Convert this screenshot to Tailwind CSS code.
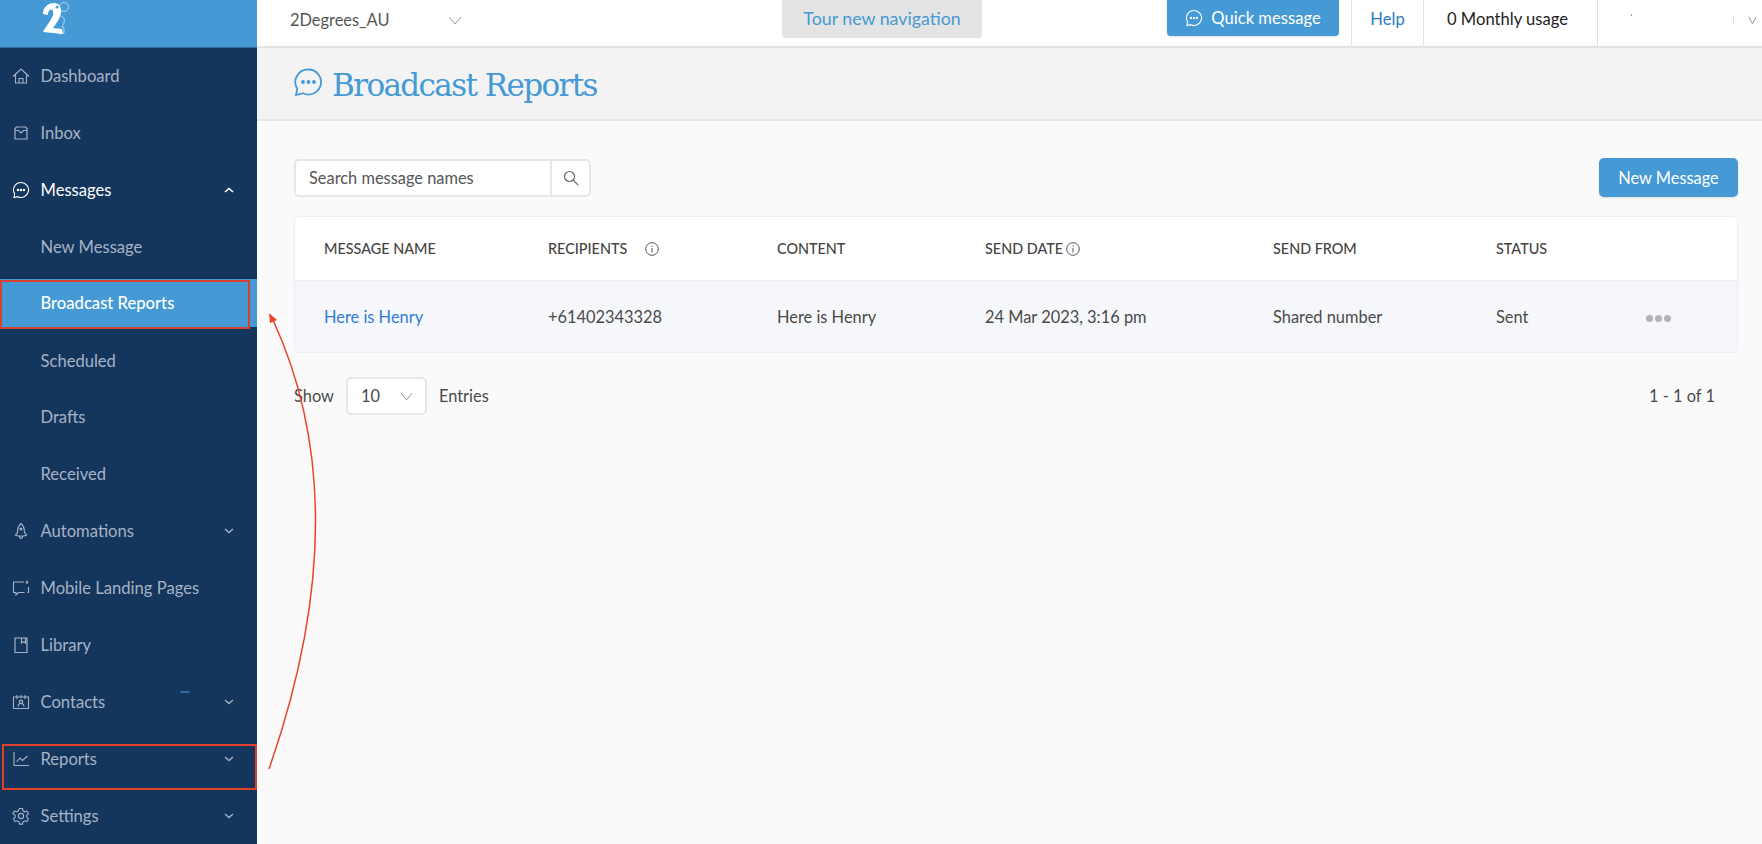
<!DOCTYPE html>
<html lang="en">
<head>
  <meta charset="UTF-8" />
  <title>Broadcast Reports</title>
  <script src="https://cdn.jsdelivr.net/npm/@tailwindcss/browser@4"></script>
</head>
<body class="h-[844px] overflow-hidden bg-[#fafafa] font-['Lato',sans-serif] text-[#4a4a4a] relative">
  <div class="flex h-full">
    <!-- sidebar -->
    <aside class="w-[257px] shrink-0 bg-[#14355c] text-[16.6px] leading-[24px] text-[#a6b3c6]">
      <div class="h-[47px] bg-[#459ad5] relative border-b border-[#2c6a9c] box-content -mb-px">
        <svg class="absolute left-0 top-0" width="80" height="47" viewBox="0 0 80 47">
          <path d="M61 16c3 1 4 4 3 7l-2 4 2 1v5l-5 1" fill="none" stroke="#cfe5f5" stroke-width="0.8"/>
          <circle cx="64" cy="7" r="4.500" fill="none" stroke="#cfe5f5" stroke-width="0.8"/>
          <path d="M43 14C43 7 48 3 54 3c5 0 8 4 7 10-1 6-5 11-8 15l9 1 1 5-20-2c3-6 8-11 10-17 1-4-1-6-3-5-2 1-2 3-2 5z" fill="#fff"/>
          <circle cx="57" cy="7" r="1.500" fill="#459ad5"/>
        </svg>
      </div>
      <nav>
        <a class="flex items-center h-[57px] pl-3 pr-[22px]">
          <svg class="w-[18px] h-[18px] mr-[10.500px]" viewBox="0 0 18 18" fill="none" stroke="currentColor" stroke-width="1.1"><path d="M1 9.500 9 2l8 7.500M3.500 8v8h11V8M7 16v-4.500h4V16"/></svg>
          <span>Dashboard</span>
        </a>
        <a class="flex items-center h-[57px] pl-3 pr-[22px]">
          <svg class="w-[18px] h-[18px] mr-[10.500px]" viewBox="0 0 18 18" fill="none" stroke="currentColor" stroke-width="1.2"><path d="M3 4.500 4.500 3h9L15 4.500V15H3zM3 6.500h3.500L9 9l2.500-2.500H15"/></svg>
          <span>Inbox</span>
        </a>
        <a class="flex items-center h-[57px] pl-3 pr-[22px] text-white">
          <svg class="w-[18px] h-[18px] mr-[10.500px]" viewBox="0 0 18 18" fill="none" stroke="currentColor" stroke-width="1.1"><path d="M9 1.500a7.500 7.500 0 1 1-3.300 14.200L2 16.500l.6-3.600A7.500 7.500 0 0 1 9 1.500z"/><circle cx="6" cy="9" r=".7" fill="currentColor"/><circle cx="9" cy="9" r=".7" fill="currentColor"/><circle cx="12" cy="9" r=".7" fill="currentColor"/></svg>
          <span>Messages</span>
          <svg class="ml-auto" width="12" height="8" viewBox="0 0 12 8" fill="none" stroke="currentColor" stroke-width="1.6"><path d="m2 6 4-3.500L10 6"/></svg>
        </a>
        <a class="flex items-center h-[57px] pl-[40.500px]">New Message</a>
        <a class="flex items-center h-[48px] mt-[4px] mb-[5px] pl-[40.500px] bg-[#459ad5] text-white font-medium">Broadcast Reports</a>
        <a class="flex items-center h-[57px] pl-[40.500px]">Scheduled</a>
        <a class="flex items-center h-[56px] pl-[40.500px]">Drafts</a>
        <a class="flex items-center h-[57px] pl-[40.500px]">Received</a>
        <a class="flex items-center h-[57px] pl-3 pr-[22px]">
          <svg class="w-[18px] h-[18px] mr-[10.500px]" viewBox="0 0 18 18" fill="none" stroke="currentColor" stroke-width="1.2"><path d="M9 1.500c2.500 2 3.500 5 3.500 9l2 2.500-2.500 1H6l-2.500-1 2-2.500c0-4 1-7 3.500-9zM7.500 14.500c.2 1.500.8 2 1.500 2s1.300-.5 1.500-2"/><circle cx="9" cy="7" r="1" fill="currentColor"/></svg>
          <span>Automations</span>
          <svg class="ml-auto" width="12" height="8" viewBox="0 0 12 8" fill="none" stroke="currentColor" stroke-width="1.4"><path d="m2 2 4 3.500L10 2"/></svg>
        </a>
        <a class="flex items-center h-[57px] pl-3 pr-[22px]">
          <svg class="w-[18px] h-[18px] mr-[10.500px]" viewBox="0 0 18 18" fill="none" stroke="currentColor" stroke-width="1.1"><path d="M12 3H1.500v10.500h2.500V16l2.500-2.500h6M16.500 8v5.500h-1M15 1.500V5M13.500 3.200h3"/></svg>
          <span>Mobile Landing Pages</span>
        </a>
        <a class="flex items-center h-[57px] pl-3 pr-[22px]">
          <svg class="w-[18px] h-[18px] mr-[10.500px]" viewBox="0 0 18 18" fill="none" stroke="currentColor" stroke-width="1.2"><path d="M3 2h12v14.500H3zM9.500 2v5l2-1.200 2 1.200V2"/></svg>
          <span>Library</span>
        </a>
        <a class="flex items-center h-[57px] pl-3 pr-[22px] relative">
          <svg class="w-[18px] h-[18px] mr-[10.500px]" viewBox="0 0 18 18" fill="none" stroke="currentColor" stroke-width="1.1"><path d="M1.500 4h15v11.500h-15zM5 2v4M9 2v3M13 2v4M6 13.500c0-2 1.300-3 3-3s3 1 3 3M9 10.500a1.700 1.700 0 1 0 0-3.400 1.700 1.700 0 0 0 0 3.400z"/></svg>
          <span>Contacts</span>
          <span class="absolute left-[180px] top-[18px] w-[10px] h-[2px] rounded-t-full bg-[#2f6c9f]"></span>
          <svg class="ml-auto" width="12" height="8" viewBox="0 0 12 8" fill="none" stroke="currentColor" stroke-width="1.4"><path d="m2 2 4 3.500L10 2"/></svg>
        </a>
        <a class="flex items-center h-[57px] pl-3 pr-[22px]">
          <svg class="w-[18px] h-[18px] mr-[10.500px]" viewBox="0 0 18 18" fill="none" stroke="currentColor" stroke-width="1.1"><path d="M2 2v13.500h15M4.500 12l3.500-4 2.500 2.500L15.500 6"/></svg>
          <span>Reports</span>
          <svg class="ml-auto" width="12" height="8" viewBox="0 0 12 8" fill="none" stroke="currentColor" stroke-width="1.4"><path d="m2 2 4 3.500L10 2"/></svg>
        </a>
        <a class="flex items-center h-[57px] pl-3 pr-[22px]">
          <svg class="w-[18px] h-[18px] mr-[10.500px]" viewBox="0 0 18 18" fill="none" stroke="currentColor" stroke-width="1.1"><path d="M7.500 1.500h3l.5 2.300 1.700 1 2.300-.7 1.500 2.600-1.700 1.600v2l1.700 1.600-1.500 2.600-2.300-.7-1.700 1-.5 2.300h-3l-.5-2.300-1.700-1-2.300.7-1.500-2.600 1.700-1.600v-2L.8 6.700l1.500-2.600 2.300.7 1.700-1z"/><circle cx="9" cy="9" r="2.600"/></svg>
          <span>Settings</span>
          <svg class="ml-auto" width="12" height="8" viewBox="0 0 12 8" fill="none" stroke="currentColor" stroke-width="1.4"><path d="m2 2 4 3.500L10 2"/></svg>
        </a>
      </nav>
    </aside>

    <div class="flex-1 min-w-0">
      <!-- top bar -->
      <header class="h-[48px] bg-white border-b-2 border-[#e3e3e3] flex items-start text-[16.6px]">
        <div class="w-[526px] pl-[33px] h-[41px] flex items-center text-[16.4px]">
          <span class="text-[#555] w-[158px]">2Degrees_AU</span>
          <svg width="14" height="9" viewBox="0 0 14 9" fill="none" stroke="#9b9b9b" stroke-width="1"><path d="m1 1 6 7 6-7"/></svg>
        </div>
        <div class="-ml-[1px] w-[200px] h-[38px] bg-[#e4e4e4] rounded-b-[4px] flex items-center justify-center text-[#4699d3] text-[17.800px] pb-[2px]">Tour new navigation</div>
        <div class="ml-[185px] w-[172px] h-[36px] bg-[#459ad5] rounded-b-[4px] shadow-[0_1px_2px_#0000001f] flex items-center justify-center text-white">
          <svg class="mr-2" width="18" height="18" viewBox="0 0 18 18" fill="none" stroke="currentColor" stroke-width="1.1"><path d="M9 1.500a7.500 7.500 0 1 1-3.300 14.200L2 16.500l.6-3.600A7.500 7.500 0 0 1 9 1.500z"/><circle cx="6" cy="9" r=".6" fill="currentColor"/><circle cx="9" cy="9" r=".6" fill="currentColor"/><circle cx="12" cy="9" r=".6" fill="currentColor"/></svg>
          <span>Quick message</span>
        </div>
        <div class="ml-[12px] w-[72px] h-full border-l border-[#e3e3e3] flex items-center justify-center text-[#2e7cc0] pb-[7px]">Help</div>
        <div class="w-[174px] h-full border-l border-[#e3e3e3] flex items-center pl-[23px] text-[#222] pb-[8px]">0 Monthly usage</div>
        <div class="flex-1 h-full border-l border-[#e3e3e3] relative">
          <span class="absolute left-[33px] top-[14px] w-px h-[2px] bg-[#999]"></span>
          <span class="absolute left-[135px] top-[17px] w-px h-[8px] bg-[#ddd]"></span>
          <svg class="absolute left-[150px] top-[16px]" width="9" height="9" viewBox="0 0 9 9" fill="none" stroke="#9b9b9b" stroke-width="1"><path d="m1 1 3.500 7L8 1"/></svg>
        </div>
      </header>

      <!-- page title -->
      <div class="h-[73px] bg-[#f3f3f3] border-b-2 border-[#e6e6e6] flex items-center pl-[37px]">
        <svg class="mr-[10px] mt-[-3px]" width="28" height="28" viewBox="0 0 28 28" fill="none" stroke="#459ad5" stroke-width="1.800"><path d="M14.500 1.500a12.500 12.500 0 1 1-5.500 23.700L2 27l1.300-6.300A12.500 12.500 0 0 1 14.500 1.500z"/><circle cx="9" cy="14" r="1" fill="#459ad5"/><circle cx="14.500" cy="14" r="1" fill="#459ad5"/><circle cx="20" cy="14" r="1" fill="#459ad5"/></svg>
        <h1 class="font-['DejaVu_Serif',serif] text-[#459ad5] text-[31px] tracking-[-1.600px] pt-[3px]">Broadcast Reports</h1>
      </div>

      <!-- content -->
      <main class="pl-[37px] pr-[24px] pt-[37px] leading-[24px]">
        <div class="flex items-center justify-between">
          <div class="w-[297px] h-[38px] bg-white border-2 border-[#e6e6e6] rounded-[5px] flex items-stretch">
            <span class="flex-1 flex items-center pl-[13px] text-[16.400px] text-[#555]">Search message names</span>
            <span class="w-[39px] border-l-2 border-[#e6e6e6] flex items-center justify-center">
              <svg width="16" height="16" viewBox="0 0 16 16" fill="none" stroke="#666" stroke-width="1.200"><circle cx="6.500" cy="6.500" r="5"/><path d="m10.200 10.200 5 5"/></svg>
            </span>
          </div>
          <button class="w-[139px] h-[39px] bg-[#459ad5] rounded-[5px] text-white text-[16.400px] shadow-[0_1px_2px_#0000001f]">New Message</button>
        </div>

        <div class="mt-[19px] border border-[#eceef2] rounded-[5px] overflow-hidden">
          <div class="h-[64px] bg-white border-b border-[#eceef2] grid grid-cols-[224px_229px_208px_288px_223px_150px_1fr] pl-[29px] items-center text-[14.400px] font-medium text-[#444] uppercase">
            <span>Message name</span>
            <span class="flex items-center">Recipients<svg class="ml-[18px]" width="14" height="14" viewBox="0 0 14 14" fill="none" stroke="#555" stroke-width="1"><circle cx="7" cy="7" r="6.300"/><path d="M7 6v4.500M7 3.500v1.300"/></svg></span>
            <span>Content</span>
            <span class="flex items-center">Send date<svg class="ml-[3px]" width="14" height="14" viewBox="0 0 14 14" fill="none" stroke="#555" stroke-width="1"><circle cx="7" cy="7" r="6.300"/><path d="M7 6v4.500M7 3.500v1.300"/></svg></span>
            <span>Send from</span>
            <span>Status</span>
            <span></span>
          </div>
          <div class="h-[71px] bg-[#f6f7fa] grid grid-cols-[224px_229px_208px_288px_223px_150px_1fr] pl-[29px] items-center text-[16.400px] text-[#4a4a4a]">
            <a class="text-[#2e7cd6]">Here is Henry</a>
            <span>+61402343328</span>
            <span>Here is Henry</span>
            <span>24 Mar 2023, 3:16 pm</span>
            <span>Shared number</span>
            <span>Sent</span>
            <span class="flex gap-[2px] pt-[4px]">
              <i class="w-[7px] h-[7px] rounded-full bg-[#b4b4b4]"></i><i class="w-[7px] h-[7px] rounded-full bg-[#b4b4b4]"></i><i class="w-[7px] h-[7px] rounded-full bg-[#b4b4b4]"></i>
            </span>
          </div>
        </div>

        <div class="mt-[24px] flex items-center text-[16.400px] pr-[23px]">
          <span class="mr-[12px]">Show</span>
          <div class="w-[81px] h-[38px] bg-white border-2 border-[#e6e6e6] rounded-[5px] flex items-center justify-between pl-[13px] pr-[12px]">
            <span>10</span>
            <svg width="13" height="9" viewBox="0 0 13 9" fill="none" stroke="#9b9b9b" stroke-width="1"><path d="m1 1 5.500 7L12 1"/></svg>
          </div>
          <span class="ml-[12px]">Entries</span>
          <span class="ml-auto">1 - 1 of 1</span>
        </div>
      </main>
    </div>
  </div>

  <!-- red annotations -->
  <div class="absolute left-0 top-[280px] w-[250px] h-[49px] border-2 border-[#d8412f]"></div>
  <div class="absolute left-[2px] top-[744px] w-[255px] h-[46px] border-2 border-[#e0402a]"></div>
  <svg class="absolute left-0 top-0 pointer-events-none" width="340" height="844" viewBox="0 0 340 844" fill="none" stroke="#e8452c" stroke-width="1.500">
    <path d="M269 769C328 600 333 450 273 320"/>
    <path d="M269 313l8 7-7 3z" fill="#e8452c" stroke="none"/>
  </svg>
</body>
</html>
